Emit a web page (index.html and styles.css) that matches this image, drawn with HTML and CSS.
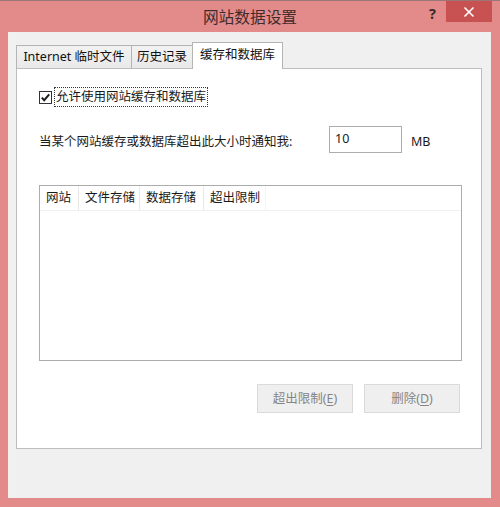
FILE: index.html
```html
<!DOCTYPE html>
<html lang="zh-CN">
<head>
<meta charset="utf-8">
<title>网站数据设置</title>
<link rel="stylesheet" href="styles.css">
</head>
<body>
<div class="window">
  <div class="titlebar">
    <div class="spacer"></div>
    <div class="title">网站数据设置</div>
    <div class="controls">
      <span class="help">?</span>
      <div class="close">
        <svg width="12" height="12" viewBox="0 0 12 12"><path d="M1.5 1.5 L10.5 10.5 M10.5 1.5 L1.5 10.5" stroke="#ffffff" stroke-width="1.6" fill="none"/></svg>
      </div>
    </div>
  </div>
  <div class="client">
    <div class="tabs">
      <div class="tab t1">Internet 临时文件</div>
      <div class="tab t2">历史记录</div>
      <div class="tab t3 active">缓存和数据库</div>
    </div>
    <div class="panel">
      <div class="check-row">
        <span class="checkbox">
          <svg width="13" height="13" viewBox="0 0 13 13"><rect x="0.5" y="0.5" width="12" height="12" fill="#ffffff" stroke="#333333"/><path d="M2.8 6.6 L5.2 9.2 L10.2 3.4" stroke="#1a1a1a" stroke-width="1.9" fill="none"/></svg>
        </span>
        <span class="focus">允许使用网站缓存和数据库</span>
      </div>
      <div class="size-row">
        <span class="size-label">当某个网站缓存或数据库超出此大小时通知我:</span>
        <div class="input">10</div>
        <span class="unit">MB</span>
      </div>
      <div class="list">
        <div class="list-head">
          <div class="col c1">网站</div>
          <div class="col c2">文件存储</div>
          <div class="col c3">数据存储</div>
          <div class="col c4">超出限制</div>
        </div>
      </div>
      <div class="buttons">
        <div class="btn">超出限制(<u>E</u>)</div>
        <div class="btn">删除(<u>D</u>)</div>
      </div>
    </div>
  </div>
</div>
</body>
</html>
```
FILE: styles.css
```css
* { box-sizing: border-box; }
html, body { margin: 0; padding: 0; }
body {
  width: 500px;
  height: 507px;
  overflow: hidden;
  background: #e38b8b;
  font-family: "Noto Sans", "Noto Sans CJK SC", sans-serif;
  font-size: 12.5px;
  color: #1a1a1a;
}
.window {
  width: 500px;
  height: 507px;
  display: flex;
  flex-direction: column;
  border-top: 1px solid #9a7676;
}
.titlebar {
  height: 31px;
  display: grid;
  grid-template-columns: 1fr auto 1fr;
  align-items: start;
}
.title {
  font-size: 15.7px;
  line-height: 30px;
  color: #3f2b2b;
  padding-top: 1px;
}
.controls {
  display: flex;
  justify-content: flex-end;
  align-items: flex-start;
  padding-right: 8px;
}
.help {
  font-family: "Noto Sans", sans-serif;
  font-weight: bold;
  font-size: 14.5px;
  line-height: 24px;
  color: #3a2a2a;
  margin-right: 10px;
}
.close {
  width: 46px;
  height: 21px;
  background: #c85151;
  display: flex;
  align-items: center;
  justify-content: center;
}
.client {
  margin: 0 9px 0 8px;
  height: 466px;
  background: #f0f0f0;
  border-left: 1px solid #f7efe9;
  padding: 10px 8px 0 7px;
}
.tabs {
  display: flex;
  align-items: flex-end;
  height: 26px;
}
.tab {
  height: 23px;
  border: 1px solid #b4b4b4;
  border-bottom: none;
  background: linear-gradient(#f2f2f2, #e9e9e9);
  text-align: center;
  line-height: 22px;
  color: #111;
  white-space: nowrap;
}
.t1 { width: 116px; }
.t2 { width: 62px; margin-left: -1px; }
.t3 { width: 91px; margin-left: -1px; }
.tab.active {
  height: 27px;
  background: #ffffff;
  margin-bottom: -1px;
  position: relative;
  z-index: 1;
  line-height: 24px;
}
.panel {
  width: 466px;
  height: 381px;
  background: #ffffff;
  border: 1px solid #bdbdbd;
  padding: 18px 20px 0 22px;
  display: flex;
  flex-direction: column;
}
.check-row {
  height: 20px;
  display: flex;
  align-items: center;
}
.checkbox {
  width: 13px;
  height: 13px;
  display: flex;
  margin-right: 2px;
}
.focus {
  border: 1px dotted #333;
  padding: 0 1px;
  line-height: 18px;
  height: 20px;
}
.size-row {
  margin-top: 19px;
  height: 27px;
  display: flex;
  align-items: center;
}
.size-label {
  width: 290px;
  white-space: nowrap;
  padding-top: 1px;
}
.input {
  width: 73px;
  height: 27px;
  border: 1px solid #adadad;
  background: #fff;
  padding-left: 5px;
  line-height: 24px;
}
.unit {
  margin-left: 9px;
  padding-top: 4px;
}
.list {
  margin-top: 32px;
  width: 423px;
  height: 176px;
  border: 1px solid #acacac;
  background: #fff;
}
.list-head {
  display: flex;
  height: 25px;
  border-bottom: 1px solid #f0f0f0;
}
.col {
  height: 24px;
  line-height: 24px;
  padding-left: 6px;
  border-right: 1px solid #e8e8e8;
  white-space: nowrap;
}
.c1 { width: 39px; }
.c2 { width: 61px; }
.c3 { width: 64px; }
.c4 { width: 62px; border-right-color: #f4f4f4; }
.buttons {
  margin-top: 23px;
  display: flex;
  justify-content: flex-end;
  gap: 11px;
  padding-right: 1px;
}
.btn {
  width: 96px;
  height: 29px;
  background: #efefef;
  border: 1px solid #dadada;
  color: #858585;
  text-align: center;
  line-height: 27px;
}
.btn u { text-underline-offset: 2px; }
```
